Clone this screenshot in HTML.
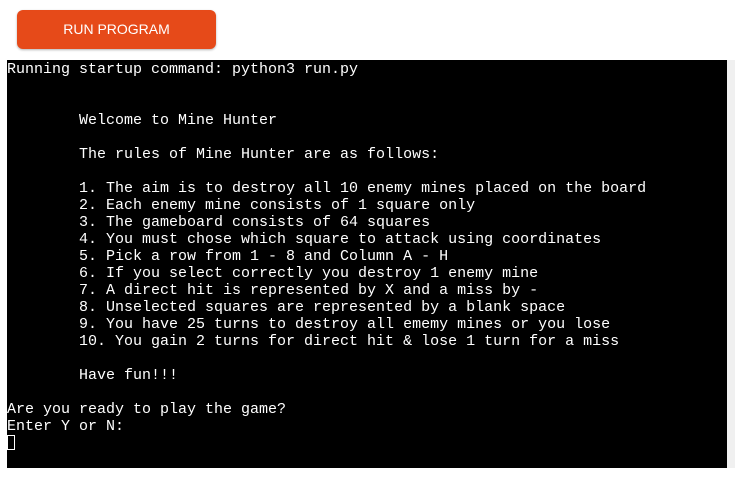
<!DOCTYPE html>
<html><head><style>
html,body{margin:0;padding:0;background:#fff;width:735px;height:485px;overflow:hidden}
.btn{position:absolute;left:17px;top:10px;width:199px;height:39px;background:#e64a19;border-radius:6px;color:#fff;font-family:"Liberation Sans",sans-serif;font-size:14px;line-height:39px;text-align:center;box-shadow:0 1px 2px rgba(0,0,0,.3)}
.term{position:absolute;left:7px;top:60px;width:720px;height:408px;background:#000}
.sb{position:absolute;left:727px;top:60px;width:8px;height:408px;background:#f0f0f0}
pre{margin:0;position:absolute;left:0;top:1px;color:#fff;font-family:"Liberation Mono",monospace;font-size:15px;line-height:17px}
.cur{display:inline-block;width:8px;height:15px;border:1px solid #fff;box-sizing:border-box;vertical-align:-3px}
</style></head><body>
<div class="btn">RUN PROGRAM</div>
<div class="term"><pre>Running startup command: python3 run.py


        Welcome to Mine Hunter

        The rules of Mine Hunter are as follows:

        1. The aim is to destroy all 10 enemy mines placed on the board
        2. Each enemy mine consists of 1 square only
        3. The gameboard consists of 64 squares
        4. You must chose which square to attack using coordinates
        5. Pick a row from 1 - 8 and Column A - H
        6. If you select correctly you destroy 1 enemy mine
        7. A direct hit is represented by X and a miss by -
        8. Unselected squares are represented by a blank space
        9. You have 25 turns to destroy all ememy mines or you lose
        10. You gain 2 turns for direct hit &amp; lose 1 turn for a miss

        Have fun!!!

Are you ready to play the game?
Enter Y or N:
<span class="cur"></span></pre></div>
<div class="sb"></div>
</body></html>
